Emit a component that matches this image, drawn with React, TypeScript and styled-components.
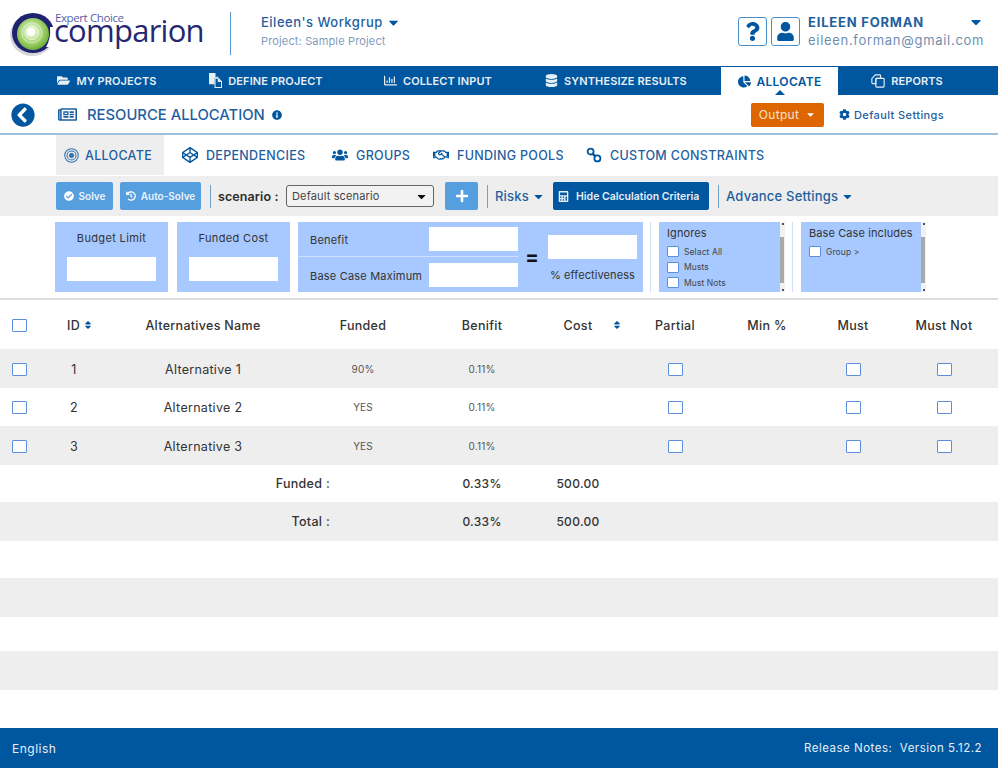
import React from 'react';
import styled, { createGlobalStyle } from 'styled-components';
import {
  FaCalculator,
  FaCaretDown,
  FaChartPie,
  FaCheckCircle,
  FaChevronCircleLeft,
  FaCodepen,
  FaCog,
  FaDatabase,
  FaFolderOpen,
  FaHistory,
  FaInfoCircle,
  FaPlus,
  FaQuestion,
  FaRegChartBar,
  FaRegHandshake,
  FaRegNewspaper,
  FaSort,
  FaUser,
  FaUsers,
} from 'react-icons/fa';

const BLUE = '#00569f';
const FONT = '"Inter", "Open Sans", "Liberation Sans", sans-serif';

const GlobalStyle = createGlobalStyle`
  html, body {
    margin: 0;
    padding: 0;
    background: #fff;
    font-family: ${FONT};
    color: #333;
  }
  * {
    box-sizing: border-box;
  }
`;

const Logo = () => (
  <LogoSvg viewBox="0 0 200 54" width="200" height="54">
    <defs>
      <radialGradient id="swirl" cx="0.45" cy="0.42" r="0.6">
        <stop offset="0" stopColor="#ffffff" />
        <stop offset="0.3" stopColor="#d4ecb4" />
        <stop offset="0.75" stopColor="#8cc653" />
        <stop offset="1" stopColor="#6aa83a" />
      </radialGradient>
    </defs>
    <ellipse cx="24" cy="28" rx="22" ry="21" fill="#d5d6dc" />
    <ellipse cx="25" cy="26" rx="21" ry="20" fill="#1f2370" />
    <circle cx="25" cy="27" r="16" fill="url(#swirl)" />
    <circle cx="24" cy="26" r="10" fill="none" stroke="#fff" strokeOpacity="0.45" />
    <circle cx="24" cy="26" r="6.5" fill="none" stroke="#fff" strokeOpacity="0.55" />
    <circle cx="23" cy="25" r="4" fill="#fff" />
    <path d="M42 20 L50 20 L50 40 L38 40 Q43 32 42 20 Z" fill="#fff" />
    <LogoSmall x="47" y="15">Expert Choice</LogoSmall>
    <LogoBig x="46" y="35">comparion</LogoBig>
  </LogoSvg>
);

const LinksIcon = () => (
  <svg viewBox="0 0 16 16" width="16" height="16" fill="none" stroke="currentColor" strokeWidth="1.8">
    <circle cx="4.6" cy="4.6" r="3" />
    <circle cx="11.4" cy="11.4" r="3" />
    <path d="M6.6 6.6 L9.4 9.4" strokeWidth="2.4" />
  </svg>
);

const RingsIcon = () => (
  <svg viewBox="0 0 16 16" width="15" height="15" fill="none" stroke="currentColor">
    <circle cx="8" cy="8" r="7.2" strokeWidth="1.1" />
    <circle cx="8" cy="8" r="4.8" strokeWidth="1.1" />
    <circle cx="8" cy="8" r="2.3" fill="currentColor" />
  </svg>
);

const PagesIcon = () => (
  <svg viewBox="0 0 14 16" width="13" height="15">
    <path d="M0 0 H7 V4 H10 V5 H6 V12 H0 Z" fill="currentColor" />
    <path d="M6.5 5.5 H10 L13.5 9 V15.5 H6.5 Z" fill="none" stroke="currentColor" strokeWidth="1.1" />
    <path d="M9.5 5.5 V9.5 H13.5" fill="currentColor" />
  </svg>
);

const ReportIcon = () => (
  <svg viewBox="0 0 16 16" width="14" height="14" fill="none" stroke="currentColor" strokeWidth="1.3">
    <path d="M5 1 H10 Q11 1 11 2 V5 H7 Q5.5 5 5.5 6.5 V11 H2 Q1 11 1 10 V5 Z" />
    <rect x="5.5" y="5" width="9.5" height="10" rx="1" />
  </svg>
);

const navItems = [
  { label: 'MY PROJECTS', icon: <FaFolderOpen />, w: 150 },
  { label: 'DEFINE PROJECT', icon: <PagesIcon />, w: 168 },
  { label: 'COLLECT INPUT', icon: <FaRegChartBar />, w: 176 },
  { label: 'SYNTHESIZE RESULTS', icon: <FaDatabase />, w: 180 },
  { label: 'ALLOCATE', icon: <FaChartPie />, w: 117, active: true },
  { label: 'REPORTS', icon: <ReportIcon />, w: 138 },
];

const tabs = [
  { label: 'ALLOCATE', icon: <RingsIcon />, w: 108, active: true },
  { label: 'DEPENDENCIES', icon: <FaCodepen />, w: 150 },
  { label: 'GROUPS', icon: <FaUsers />, w: 101 },
  { label: 'FUNDING POOLS', icon: <FaRegHandshake />, w: 153 },
  { label: 'CUSTOM CONSTRAINTS', icon: <LinksIcon />, w: 180 },
];

const rows = [
  { id: 1, name: 'Alternative 1', funded: '90%', benefit: '0.11%', h: 39 },
  { id: 2, name: 'Alternative 2', funded: 'YES', benefit: '0.11%', h: 38 },
  { id: 3, name: 'Alternative 3', funded: 'YES', benefit: '0.11%', h: 39 },
];

const blanks = [
  { h: 37 },
  { h: 39, shaded: true },
  { h: 34 },
  { h: 39, shaded: true },
  { h: 38 },
];

const Strip = () => (
  <ScrollStrip>
    <StripEnd />
    <StripThumb />
    <StripEnd $down />
  </ScrollStrip>
);

const App = () => (
  <Page>
    <GlobalStyle />
    <Header>
      <Logo />
      <HeaderDivider />
      <Workgroup>
        <WorkgroupName>
          Eileen's Workgrup <FaCaretDown />
        </WorkgroupName>
        <ProjectName>Project: Sample Project</ProjectName>
      </Workgroup>
      <UserArea>
        <IconBox>
          <FaQuestion />
        </IconBox>
        <IconBox>
          <FaUser />
        </IconBox>
        <UserInfo>
          <UserName>
            EILEEN FORMAN
            <FaCaretDown />
          </UserName>
          <UserEmail>eileen.forman@gmail.com</UserEmail>
        </UserInfo>
      </UserArea>
    </Header>

    <Nav>
      {navItems.map((item) => (
        <NavItem key={item.label} $w={item.w} $active={item.active}>
          {item.icon}
          {item.label}
        </NavItem>
      ))}
    </Nav>

    <SubHeader>
      <BackButton>
        <FaChevronCircleLeft />
      </BackButton>
      <PageTitle>
        <FaRegNewspaper />
        <span>RESOURCE ALLOCATION</span>
        <InfoIcon>
          <FaInfoCircle />
        </InfoIcon>
      </PageTitle>
      <OutputButton>
        Output <FaCaretDown />
      </OutputButton>
      <SettingsLink>
        <FaCog />
        Default Settings
      </SettingsLink>
    </SubHeader>

    <Tabs>
      {tabs.map((tab) => (
        <Tab key={tab.label} $w={tab.w} $active={tab.active}>
          {tab.icon}
          {tab.label}
        </Tab>
      ))}
    </Tabs>

    <Toolbar>
      <SolveButton $w={57}>
        <FaCheckCircle />
        Solve
      </SolveButton>
      <SolveButton $w={81}>
        <FaHistory />
        Auto-Solve
      </SolveButton>
      <ToolDivider />
      <ScenarioLabel>scenario :</ScenarioLabel>
      <ScenarioSelect>
        Default scenario
        <FaCaretDown />
      </ScenarioSelect>
      <PlusButton>
        <FaPlus />
      </PlusButton>
      <ToolDivider />
      <ToolLink $w={50}>
        Risks <FaCaretDown />
      </ToolLink>
      <HideButton>
        <FaCalculator />
        Hide Calculation Criteria
      </HideButton>
      <ToolDivider />
      <ToolLink>
        Advance Settings <FaCaretDown />
      </ToolLink>
    </Toolbar>

    <Criteria>
      <StackPanel>
        <PanelLabel>Budget Limit</PanelLabel>
        <WhiteField $w={89} />
      </StackPanel>
      <StackPanel>
        <PanelLabel>Funded Cost</PanelLabel>
        <WhiteField $w={89} />
      </StackPanel>
      <FormulaPanel>
        <FormulaRows>
          <FormulaRow>
            <span>Benefit</span>
            <WhiteField $w={89} />
          </FormulaRow>
          <FormulaRow>
            <span>Base Case Maximum</span>
            <WhiteField $w={89} />
          </FormulaRow>
        </FormulaRows>
        <Equals>=</Equals>
        <Effectiveness>
          <WhiteField $w={89} />
          <span>% effectiveness</span>
        </Effectiveness>
      </FormulaPanel>
      <PanelDivider />
      <ListPanel $w={126}>
        <ListBody>
          <ListTitle>Ignores</ListTitle>
          <ListOption>
            <SmallCheck type="checkbox" />
            Selact All
          </ListOption>
          <ListOption>
            <SmallCheck type="checkbox" />
            Musts
          </ListOption>
          <ListOption>
            <SmallCheck type="checkbox" />
            Must Nots
          </ListOption>
        </ListBody>
        <Strip />
      </ListPanel>
      <PanelDivider />
      <ListPanel $w={125}>
        <ListBody>
          <ListTitle>Base Case includes</ListTitle>
          <ListOption>
            <SmallCheck type="checkbox" />
            Group &gt;
          </ListOption>
        </ListBody>
        <Strip />
      </ListPanel>
    </Criteria>

    <Table>
      <HeadRow>
        <Cell>
          <RowCheck type="checkbox" />
        </Cell>
        <IdHead>
          ID
          <SortMark>
            <FaSort />
          </SortMark>
        </IdHead>
        <Cell>Alternatives Name</Cell>
        <Cell>Funded</Cell>
        <Cell>Benifit</Cell>
        <Cell>
          Cost
          <CostSort>
            <FaSort />
          </CostSort>
        </Cell>
        <Cell>Partial</Cell>
        <Cell>Min %</Cell>
        <Cell>Must</Cell>
        <Cell>Must Not</Cell>
      </HeadRow>
      {rows.map((row, i) => (
        <BodyRow key={row.id} $h={row.h} $shaded={i % 2 === 0}>
          <Cell>
            <RowCheck type="checkbox" />
          </Cell>
          <Cell>{row.id}</Cell>
          <Cell>{row.name}</Cell>
          <SmallCell>{row.funded}</SmallCell>
          <SmallCell>{row.benefit}</SmallCell>
          <Cell />
          <Cell>
            <RowCheck type="checkbox" />
          </Cell>
          <Cell />
          <Cell>
            <RowCheck type="checkbox" />
          </Cell>
          <Cell>
            <RowCheck type="checkbox" />
          </Cell>
        </BodyRow>
      ))}
      <BodyRow $h={37}>
        <TotalLabel>Funded :</TotalLabel>
        <TotalCell>0.33%</TotalCell>
        <TotalCell>500.00</TotalCell>
      </BodyRow>
      <BodyRow $h={39} $shaded>
        <TotalLabel>Total :</TotalLabel>
        <TotalCell>0.33%</TotalCell>
        <TotalCell>500.00</TotalCell>
      </BodyRow>
      {blanks.map((blank, i) => (
        <BodyRow key={i} $h={blank.h} $shaded={blank.shaded} />
      ))}
    </Table>

    <Footer>
      <span>English</span>
      <FooterNotes>Release Notes:&nbsp; Version 5.12.2</FooterNotes>
    </Footer>
  </Page>
);

const Page = styled.div`
  width: 998px;
  height: 768px;
  overflow: hidden;
  display: flex;
  flex-direction: column;
`;

const Header = styled.header`
  height: 66px;
  flex: none;
  display: flex;
  align-items: center;
  padding: 0 14px 0 8px;
`;
const LogoSvg = styled.svg`
  flex: none;
  margin-top: 2px;
`;
const LogoSmall = styled.text`
  font-family: 'Open Sans', sans-serif;
  font-size: 11.5px;
  fill: #5a5fa8;
  letter-spacing: -0.4px;
`;
const LogoBig = styled.text`
  font-family: 'Open Sans', sans-serif;
  font-size: 31px;
  fill: #25286f;
  letter-spacing: -0.75px;
`;
const HeaderDivider = styled.div`
  width: 1px;
  height: 43px;
  margin: 0 30px 0 22px;
  background: #5b9bd5;
`;
const Workgroup = styled.div`
  display: flex;
  flex-direction: column;
  gap: 4px;
  padding-bottom: 4px;
`;
const WorkgroupName = styled.div`
  display: flex;
  align-items: center;
  gap: 3px;
  font-size: 13px;
  font-weight: 500;
  letter-spacing: 0.5px;
  color: #1f5f9f;
  svg {
    font-size: 15px;
    color: ${BLUE};
  }
`;
const ProjectName = styled.div`
  font-size: 11px;
  letter-spacing: 0.15px;
  color: #7f9cbc;
`;
const UserArea = styled.div`
  margin-left: auto;
  display: flex;
  align-items: center;
  gap: 4px;
  padding-bottom: 4px;
`;
const IconBox = styled.div`
  width: 29px;
  height: 29px;
  display: flex;
  align-items: center;
  justify-content: center;
  border: 1px solid #4a90c8;
  border-radius: 3px;
  font-size: 19px;
  color: ${BLUE};
`;
const UserInfo = styled.div`
  width: 176px;
  margin-left: 4px;
  display: flex;
  flex-direction: column;
  gap: 2px;
`;
const UserName = styled.div`
  display: flex;
  align-items: center;
  justify-content: space-between;
  font-size: 13px;
  font-weight: 700;
  letter-spacing: 0.8px;
  color: #1f5f9f;
  svg {
    font-size: 16px;
    color: ${BLUE};
  }
`;
const UserEmail = styled.div`
  font-size: 13px;
  letter-spacing: 0.7px;
  color: #6f8fb0;
  white-space: nowrap;
`;

const Nav = styled.nav`
  height: 29px;
  flex: none;
  display: flex;
  padding: 0 0 0 32px;
  background: ${BLUE};
`;
const NavItem = styled.div<{ $w: number; $active?: boolean }>`
  width: ${(p) => p.$w}px;
  margin-left: ${(p) => (p.$active ? 15 : 0)}px;
  margin-top: ${(p) => (p.$active ? 1 : 0)}px;
  position: relative;
  display: flex;
  align-items: center;
  justify-content: center;
  gap: 6px;
  font-size: ${(p) => (p.$active ? 12 : 11)}px;
  font-weight: 600;
  letter-spacing: ${(p) => (p.$active ? 0.3 : 0.1)}px;
  color: ${(p) => (p.$active ? BLUE : '#e6eef6')};
  background: ${(p) => (p.$active ? '#fff' : 'transparent')};
  svg {
    font-size: 13px;
    flex: none;
  }
  &::after {
    content: '';
    display: ${(p) => (p.$active ? 'block' : 'none')};
    position: absolute;
    left: 50%;
    bottom: 0;
    margin-left: -5px;
    border: 5px solid transparent;
    border-top: 0;
    border-bottom-color: ${BLUE};
  }
`;

const SubHeader = styled.div`
  height: 40px;
  flex: none;
  display: flex;
  align-items: center;
  padding: 1px 0 0 11px;
  border-bottom: 2px solid #9cc0de;
`;
const BackButton = styled.div`
  display: flex;
  font-size: 24px;
  color: ${BLUE};
`;
const PageTitle = styled.div`
  margin-left: 23px;
  display: flex;
  align-items: center;
  gap: 10px;
  font-size: 14.8px;
  font-weight: 500;
  color: #1f5f9f;
  svg {
    font-size: 19px;
    flex: none;
  }
`;
const InfoIcon = styled.span`
  display: flex;
  margin-left: -3px;
  svg {
    font-size: 10px;
    color: ${BLUE};
  }
`;
const OutputButton = styled.div`
  width: 73px;
  height: 24px;
  margin-left: auto;
  display: flex;
  align-items: center;
  justify-content: center;
  gap: 6px;
  border-radius: 2px;
  background: #dd6600;
  color: #f7e2cf;
  font-size: 12px;
  letter-spacing: 0.3px;
  svg {
    font-size: 11px;
    color: #fff;
  }
`;
const SettingsLink = styled.div`
  width: 159px;
  margin-left: 15px;
  display: flex;
  align-items: center;
  gap: 4px;
  font-size: 11px;
  font-weight: 500;
  letter-spacing: 0.4px;
  color: #1f5f9f;
  svg {
    font-size: 11px;
    color: ${BLUE};
  }
`;

const Tabs = styled.div`
  height: 41px;
  flex: none;
  padding-left: 56px;
  display: flex;
`;
const Tab = styled.div<{ $w: number; $active?: boolean }>`
  width: ${(p) => p.$w}px;
  height: 40px;
  flex: none;
  display: flex;
  align-items: center;
  gap: ${(p) => (p.$active ? 6 : 8)}px;
  padding-left: ${(p) => (p.$active ? 8 : 0)}px;
  margin-right: ${(p) => (p.$active ? 18 : 0)}px;
  background: ${(p) => (p.$active ? '#eeeeee' : 'transparent')};
  font-size: 12.5px;
  font-weight: 500;
  letter-spacing: 0.3px;
  color: #1f5f9f;
  svg {
    font-size: 16px;
    flex: none;
    color: ${(p) => (p.$active ? '#2f72ad' : BLUE)};
  }
`;

const Toolbar = styled.div`
  height: 40px;
  flex: none;
  display: flex;
  align-items: center;
  padding-left: 56px;
  background: #eeeeee;
`;
const SolveButton = styled.div<{ $w: number }>`
  width: ${(p) => p.$w}px;
  height: 28px;
  margin-right: 7px;
  display: flex;
  align-items: center;
  justify-content: center;
  gap: 5px;
  border-radius: 2px;
  background: #559fdf;
  color: #eaf3fb;
  font-size: 10px;
  font-weight: 600;
  svg {
    font-size: 10px;
    color: #fff;
  }
`;
const ToolDivider = styled.div`
  width: 1px;
  height: 23px;
  margin: 0 7px 0 2px;
  background: #6fa0c8;
`;
const ScenarioLabel = styled.div`
  width: 68px;
  font-size: 12.5px;
  font-weight: 600;
  letter-spacing: 0.1px;
  color: #2c2c2c;
`;
const ScenarioSelect = styled.div`
  width: 148px;
  height: 22px;
  display: flex;
  align-items: center;
  justify-content: space-between;
  padding: 0 5px;
  border: 1px solid #666;
  border-radius: 3px;
  font-size: 11px;
  letter-spacing: 0.15px;
  color: #444;
  background: #f2f2f2;
  svg {
    font-size: 13px;
    color: #111;
  }
`;
const PlusButton = styled.div`
  width: 33px;
  height: 28px;
  margin: 0 7px 0 11px;
  display: flex;
  align-items: center;
  justify-content: center;
  border-radius: 2px;
  background: #559fdf;
  color: #fff;
  font-size: 14px;
`;
const ToolLink = styled.div<{ $w?: number }>`
  ${(p) => (p.$w ? `width: ${p.$w}px; margin-right: 8px;` : '')}
  display: flex;
  align-items: center;
  justify-content: space-between;
  gap: 3px;
  font-size: 13px;
  font-weight: 500;
  letter-spacing: 0.2px;
  color: #1f5f9f;
  svg {
    font-size: 13px;
    color: ${BLUE};
  }
`;
const HideButton = styled.div`
  width: 156px;
  height: 28px;
  margin-right: 7px;
  display: flex;
  align-items: center;
  gap: 7px;
  padding-left: 5px;
  border-radius: 2px;
  background: ${BLUE};
  color: #e6eef6;
  font-size: 10.5px;
  font-weight: 600;
  svg {
    font-size: 11px;
    flex: none;
  }
`;

const Criteria = styled.section`
  height: 82px;
  flex: none;
  display: flex;
  align-items: flex-start;
  padding: 6px 0 0 55px;
`;
const Panel = styled.div`
  height: 70px;
  background: #a8c9ff;
`;
const StackPanel = styled(Panel)`
  width: 113px;
  margin-right: 9px;
  display: flex;
  flex-direction: column;
  align-items: center;
  padding-top: 10px;
  gap: 12px;
`;
const PanelLabel = styled.div`
  font-size: 11px;
  letter-spacing: 0.35px;
  line-height: 13px;
  color: #333;
`;
const WhiteField = styled.div<{ $w: number }>`
  width: ${(p) => p.$w}px;
  height: 24px;
  flex: none;
  background: #fff;
`;
const FormulaPanel = styled(Panel)`
  width: 345px;
  margin-left: -1px;
  display: flex;
`;
const FormulaRows = styled.div`
  width: 220px;
  display: flex;
  flex-direction: column;
`;
const FormulaRow = styled.div`
  height: 35px;
  flex: none;
  display: flex;
  align-items: center;
  justify-content: space-between;
  padding-left: 12px;
  font-size: 11px;
  letter-spacing: 0.2px;
  color: #333;
  &:first-child {
    border-bottom: 1px solid #cfe0fb;
  }
  > span {
    padding-top: 2px;
  }
`;
const Equals = styled.div`
  width: 30px;
  margin-left: -1px;
  margin-right: 1px;
  text-align: center;
  line-height: 70px;
  font-size: 20px;
  font-weight: 700;
  color: #111;
`;
const Effectiveness = styled.div`
  display: flex;
  flex-direction: column;
  align-items: center;
  gap: 9px;
  padding-top: 13px;
  font-size: 11px;
  letter-spacing: 0.1px;
  color: #333;
`;
const PanelDivider = styled.div`
  width: 1px;
  height: 70px;
  margin: 0 8px 0 7px;
  background: #cfe0fb;
`;
const ListPanel = styled(Panel)<{ $w: number }>`
  width: ${(p) => p.$w}px;
  display: flex;
  justify-content: space-between;
`;
const ListBody = styled.div`
  padding: 4px 0 0 8px;
`;
const ListTitle = styled.div`
  font-size: 11px;
  letter-spacing: 0.1px;
  line-height: 14px;
  margin-bottom: 4px;
  color: #333;
`;
const ListOption = styled.label`
  display: flex;
  align-items: center;
  gap: 5px;
  height: 15.5px;
  font-size: 8.5px;
  letter-spacing: 0.1px;
  color: #444;
`;
const CheckBase = styled.input`
  appearance: none;
  margin: 0;
  flex: none;
  background: #fff;
  border-style: solid;
  border-color: #5b8fdc;
`;
const SmallCheck = styled(CheckBase)`
  width: 12px;
  height: 11px;
  border-width: 1px;
  border-radius: 1px;
`;
const ScrollStrip = styled.div`
  width: 5px;
  flex: none;
  display: flex;
  flex-direction: column;
  background: #f1f1f1;
`;
const StripEnd = styled.div<{ $down?: boolean }>`
  height: 8px;
  flex: none;
  display: flex;
  align-items: ${(p) => (p.$down ? 'flex-end' : 'flex-start')};
  justify-content: center;
  padding: 1px 0;
  &::before {
    content: '';
    width: 2px;
    height: 2px;
    background: #555;
  }
`;
const StripThumb = styled.div`
  flex: 1;
  margin: 7px 1px 1px 0;
  background: #a9a9a9;
`;

const Table = styled.section`
  flex: 1;
  border-top: 2px solid #dddddd;
`;
const columns = '38px 72px 186px 134px 104px 88px 106px 78px 94px 88px';
const HeadRow = styled.div`
  height: 49px;
  display: grid;
  grid-template-columns: ${columns};
  font-weight: 500;
`;
const BodyRow = styled.div<{ $h: number; $shaded?: boolean }>`
  height: ${(p) => p.$h}px;
  display: grid;
  grid-template-columns: ${columns};
  background: ${(p) => (p.$shaded ? '#eeeeee' : '#fff')};
`;
const Cell = styled.div`
  position: relative;
  display: flex;
  align-items: center;
  justify-content: center;
  padding-top: 1px;
  font-size: 12.5px;
  letter-spacing: 0.3px;
  color: #333;
`;
const IdHead = styled(Cell)`
  padding-left: 12px;
`;
const SmallCell = styled(Cell)`
  padding-top: 0;
  font-size: 10px;
  letter-spacing: 0.15px;
  color: #555;
`;
const TotalLabel = styled(Cell)`
  grid-column: 1 / span 4;
  justify-content: flex-end;
  padding-top: 0;
  padding-right: 100px;
  font-weight: 500;
`;
const TotalCell = styled(Cell)`
  padding-top: 0;
  font-size: 12px;
  font-weight: 500;
`;
const RowCheck = styled(CheckBase)`
  width: 15px;
  height: 13px;
  border-width: 1px;
  border-radius: 1px;
`;
const SortMark = styled.span`
  display: flex;
  margin-left: 3px;
  font-size: 10px;
  color: ${BLUE};
`;
const CostSort = styled(SortMark)`
  position: absolute;
  right: 0;
  top: 20px;
`;

const Footer = styled.footer`
  height: 40px;
  flex: none;
  display: flex;
  align-items: center;
  justify-content: space-between;
  padding: 0 16px 0 12px;
  background: ${BLUE};
  color: #e6eef6;
  font-size: 12px;
  letter-spacing: 0.5px;
`;
const FooterNotes = styled.span`
  font-size: 11.5px;
`;

export default App;
